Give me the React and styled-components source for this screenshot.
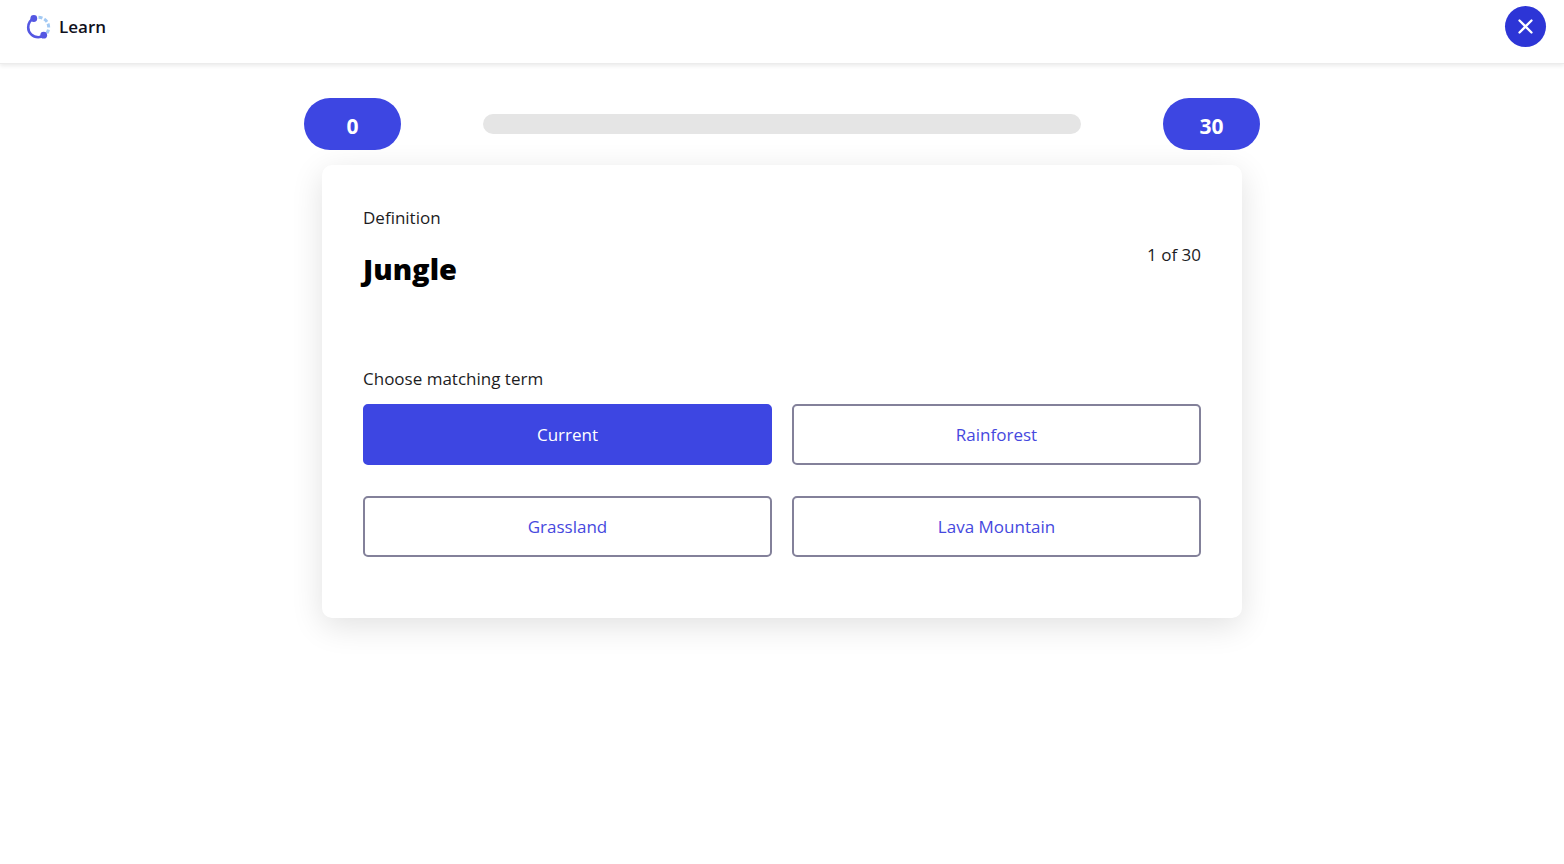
import { useState } from "react";
import styled, { createGlobalStyle } from "styled-components";

const GlobalStyles = createGlobalStyle`
  *, *::before, *::after {
    box-sizing: border-box;
  }

  body {
    margin: 0;
    background: #fff;
    color: #1c1c1e;
    font-family: "Open Sans", sans-serif;
    font-size: 17px;
    line-height: 24px;
  }

  button {
    font: inherit;
    cursor: pointer;
  }
`;

const PageStyles = styled.div`
  min-height: 100vh;
`;

const HeaderStyles = styled.header`
  display: flex;
  align-items: flex-start;
  justify-content: space-between;
  height: 64px;
  padding: 6px 18px 0 26px;
  border-bottom: 1px solid #ececec;
  box-shadow: 0 2px 4px rgba(0, 0, 0, 0.08);
`;

const BrandStyles = styled.div`
  display: flex;
  align-items: center;
  gap: 8px;
  height: 41px;
`;

const BrandName = styled.span`
  color: #101020;
  font-weight: 600;
`;

const CloseButton = styled.button`
  display: flex;
  align-items: center;
  justify-content: center;
  width: 41px;
  height: 41px;
  padding: 0;
  border: 0;
  border-radius: 50%;
  background: #2d35d6;
  color: #fff;
`;

const MainStyles = styled.main`
  max-width: 956px;
  margin: 0 auto;
  padding: 34px 0 60px;
`;

const ProgressRow = styled.div`
  display: flex;
  align-items: center;
  gap: 82px;
`;

const Count = styled.span`
  width: 97px;
  padding: 16px 0 12px;
  border-radius: 26px;
  background: #3d46e2;
  color: #fff;
  font-size: 21px;
  font-weight: 700;
  text-align: center;
`;

const Track = styled.div`
  flex: 1;
  height: 20px;
  border-radius: 10px;
  background: #e5e5e5;
  overflow: hidden;
`;

const Fill = styled.div`
  height: 100%;
  background: #3d46e2;
`;

const CardStyles = styled.section`
  margin: 15px 18px 0;
  padding: 41px 41px 61px;
  border-radius: 10px;
  background: #fff;
  box-shadow: 0 8px 32px rgba(0, 0, 0, 0.12);
`;

const QuestionStyles = styled.div`
  display: flex;
  align-items: center;
  justify-content: space-between;
  height: 98px;
`;

const Label = styled.p`
  margin: 0;
`;

const Word = styled.h1`
  margin: 19px 0 15px;
  color: #000;
  font-size: 29px;
  font-weight: 800;
  line-height: 40px;
`;

const AnswersStyles = styled.fieldset`
  min-width: 0;
  margin: 63px 0 0;
  padding: 0;
  border: 0;

  legend {
    padding: 0;
    margin-bottom: 13px;
  }
`;

const AnswerGrid = styled.div`
  display: grid;
  grid-template-columns: 1fr 1fr;
  gap: 31px 20px;
`;

const AnswerButton = styled.button`
  height: 61px;
  border: 2px solid ${({ $active }) => ($active ? "#3d46e2" : "#83819a")};
  border-radius: 5px;
  background: ${({ $active }) => ($active ? "#3d46e2" : "#fff")};
  color: ${({ $active }) => ($active ? "#fff" : "#4648de")};
  font-weight: 500;
`;

const total = 30;
const terms = ["Current", "Rainforest", "Grassland", "Lava Mountain"];

function LearnIcon() {
  return (
    <svg width="25" height="26" viewBox="0 0 25 26" fill="none" aria-hidden="true">
      <path
        d="M8 4.2C4.4 6 2.2 9.5 2.2 13.5c0 5.4 4.6 9.7 10 9.7 2 0 3.800-.6 5.400-1.700"
        stroke="#5457e2"
        strokeWidth="2.600"
      />
      <path
        d="M12.500 3.300c5.600 0 10.200 4.500 10.200 10.200 0 2.300-.8 4.500-2.200 6.200"
        stroke="#a3c9f3"
        strokeWidth="3"
        strokeDasharray="4 2"
      />
      <circle cx="7.800" cy="4.500" r="3.400" fill="#5457e2" />
      <circle cx="17.700" cy="21.200" r="3.400" fill="#5457e2" />
    </svg>
  );
}

function Header() {
  return (
    <HeaderStyles>
      <BrandStyles>
        <LearnIcon />
        <BrandName>Learn</BrandName>
      </BrandStyles>
      <CloseButton type="button" aria-label="Close">
        <svg width="15" height="15" viewBox="0 0 15 15" fill="none" aria-hidden="true">
          <path d="M1.500 1.500l12 12M13.500 1.500l-12 12" stroke="currentColor" strokeWidth="2.300" strokeLinecap="round" />
        </svg>
      </CloseButton>
    </HeaderStyles>
  );
}

export default function App() {
  const [picked, setPicked] = useState("Current");
  const done = 0;

  return (
    <PageStyles>
      <GlobalStyles />
      <Header />
      <MainStyles>
        <ProgressRow>
          <Count>{done}</Count>
          <Track role="progressbar" aria-label="Progress" aria-valuenow={done} aria-valuemax={total}>
            <Fill style={{ width: `${(done / total) * 100}%` }} />
          </Track>
          <Count>{total}</Count>
        </ProgressRow>
        <CardStyles>
          <QuestionStyles>
            <div>
              <Label>Definition</Label>
              <Word>Jungle</Word>
            </div>
            <Label>
              {done + 1} of {total}
            </Label>
          </QuestionStyles>
          <AnswersStyles>
            <legend>Choose matching term</legend>
            <AnswerGrid>
              {terms.map((term) => (
                <AnswerButton
                  key={term}
                  type="button"
                  $active={term === picked}
                  aria-pressed={term === picked}
                  onClick={() => setPicked(term)}
                >
                  {term}
                </AnswerButton>
              ))}
            </AnswerGrid>
          </AnswersStyles>
        </CardStyles>
      </MainStyles>
    </PageStyles>
  );
}
